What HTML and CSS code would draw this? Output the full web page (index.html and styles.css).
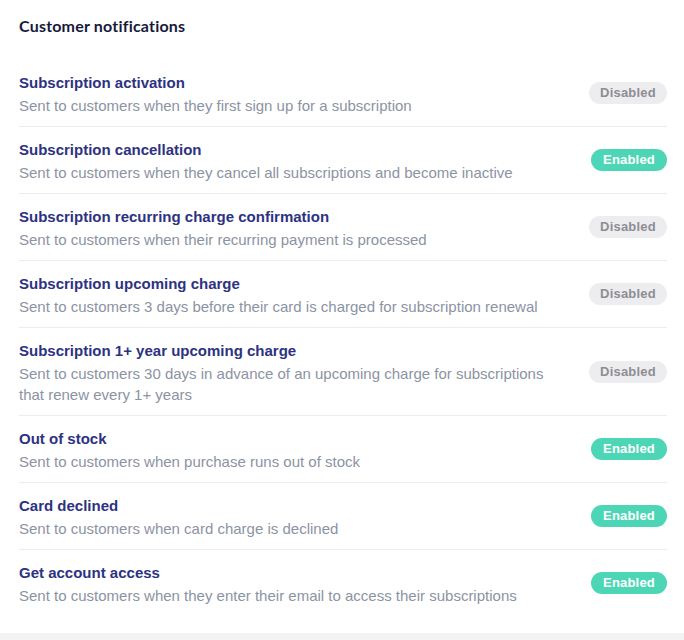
FILE: index.html
```html
<!DOCTYPE html>
<html>
<head>
<meta charset="utf-8">
<link rel="stylesheet" href="styles.css">
</head>
<body>
<div class="card">
  <h2 class="heading">Customer notifications</h2>
  <div class="list">
    <div class="row">
      <div class="text">
        <div class="title">Subscription activation</div>
        <div class="desc">Sent to customers when they first sign up for a subscription</div>
      </div>
      <span class="badge off">Disabled</span>
    </div>
    <div class="row">
      <div class="text">
        <div class="title">Subscription cancellation</div>
        <div class="desc">Sent to customers when they cancel all subscriptions and become inactive</div>
      </div>
      <span class="badge on">Enabled</span>
    </div>
    <div class="row">
      <div class="text">
        <div class="title">Subscription recurring charge confirmation</div>
        <div class="desc">Sent to customers when their recurring payment is processed</div>
      </div>
      <span class="badge off">Disabled</span>
    </div>
    <div class="row">
      <div class="text">
        <div class="title">Subscription upcoming charge</div>
        <div class="desc">Sent to customers 3 days before their card is charged for subscription renewal</div>
      </div>
      <span class="badge off">Disabled</span>
    </div>
    <div class="row">
      <div class="text">
        <div class="title">Subscription 1+ year upcoming charge</div>
        <div class="desc">Sent to customers 30 days in advance of an upcoming charge for subscriptions<br>that renew every 1+ years</div>
      </div>
      <span class="badge off">Disabled</span>
    </div>
    <div class="row">
      <div class="text">
        <div class="title">Out of stock</div>
        <div class="desc">Sent to customers when purchase runs out of stock</div>
      </div>
      <span class="badge on">Enabled</span>
    </div>
    <div class="row">
      <div class="text">
        <div class="title">Card declined</div>
        <div class="desc">Sent to customers when card charge is declined</div>
      </div>
      <span class="badge on">Enabled</span>
    </div>
    <div class="row">
      <div class="text">
        <div class="title">Get account access</div>
        <div class="desc">Sent to customers when they enter their email to access their subscriptions</div>
      </div>
      <span class="badge on">Enabled</span>
    </div>
  </div>
</div>
</body>
</html>
```
FILE: styles.css
```css
html, body {
  margin: 0;
  padding: 0;
  background: #f3f3f4;
}
body {
  font-family: "Liberation Sans", Arial, sans-serif;
}
.card {
  background: #ffffff;
  padding: 16px 17px 16px 19px;
}
.heading {
  margin: 0 0 24px 0;
  font-family: Lato, "Noto Sans", sans-serif;
  font-weight: 700;
  font-size: 16px;
  letter-spacing: 0.2px;
  line-height: 20px;
  color: #161a3a;
}
.row {
  display: flex;
  align-items: center;
  justify-content: space-between;
  padding: 13px 0 10px 0;
  border-bottom: 1px solid #ececee;
}
.row:last-child {
  border-bottom: none;
  padding-bottom: 11px;
}
.title {
  font-size: 15px;
  font-weight: 700;
  line-height: 20px;
  color: #2d3282;
}
.desc {
  margin-top: 2px;
  font-size: 15px;
  line-height: 21px;
  color: #8c93a3;
}
.badge {
  flex: none;
  height: 22px;
  line-height: 22px;
  margin-bottom: 3px;
  border-radius: 11px;
  font-size: 13px;
  font-weight: 700;
  text-align: center;
  letter-spacing: 0.2px;
}
.badge.off {
  width: 78px;
  background: #ededef;
  color: #8d8e93;
}
.badge.on {
  width: 76px;
  background: #4dd6b5;
  color: #ffffff;
}
```
